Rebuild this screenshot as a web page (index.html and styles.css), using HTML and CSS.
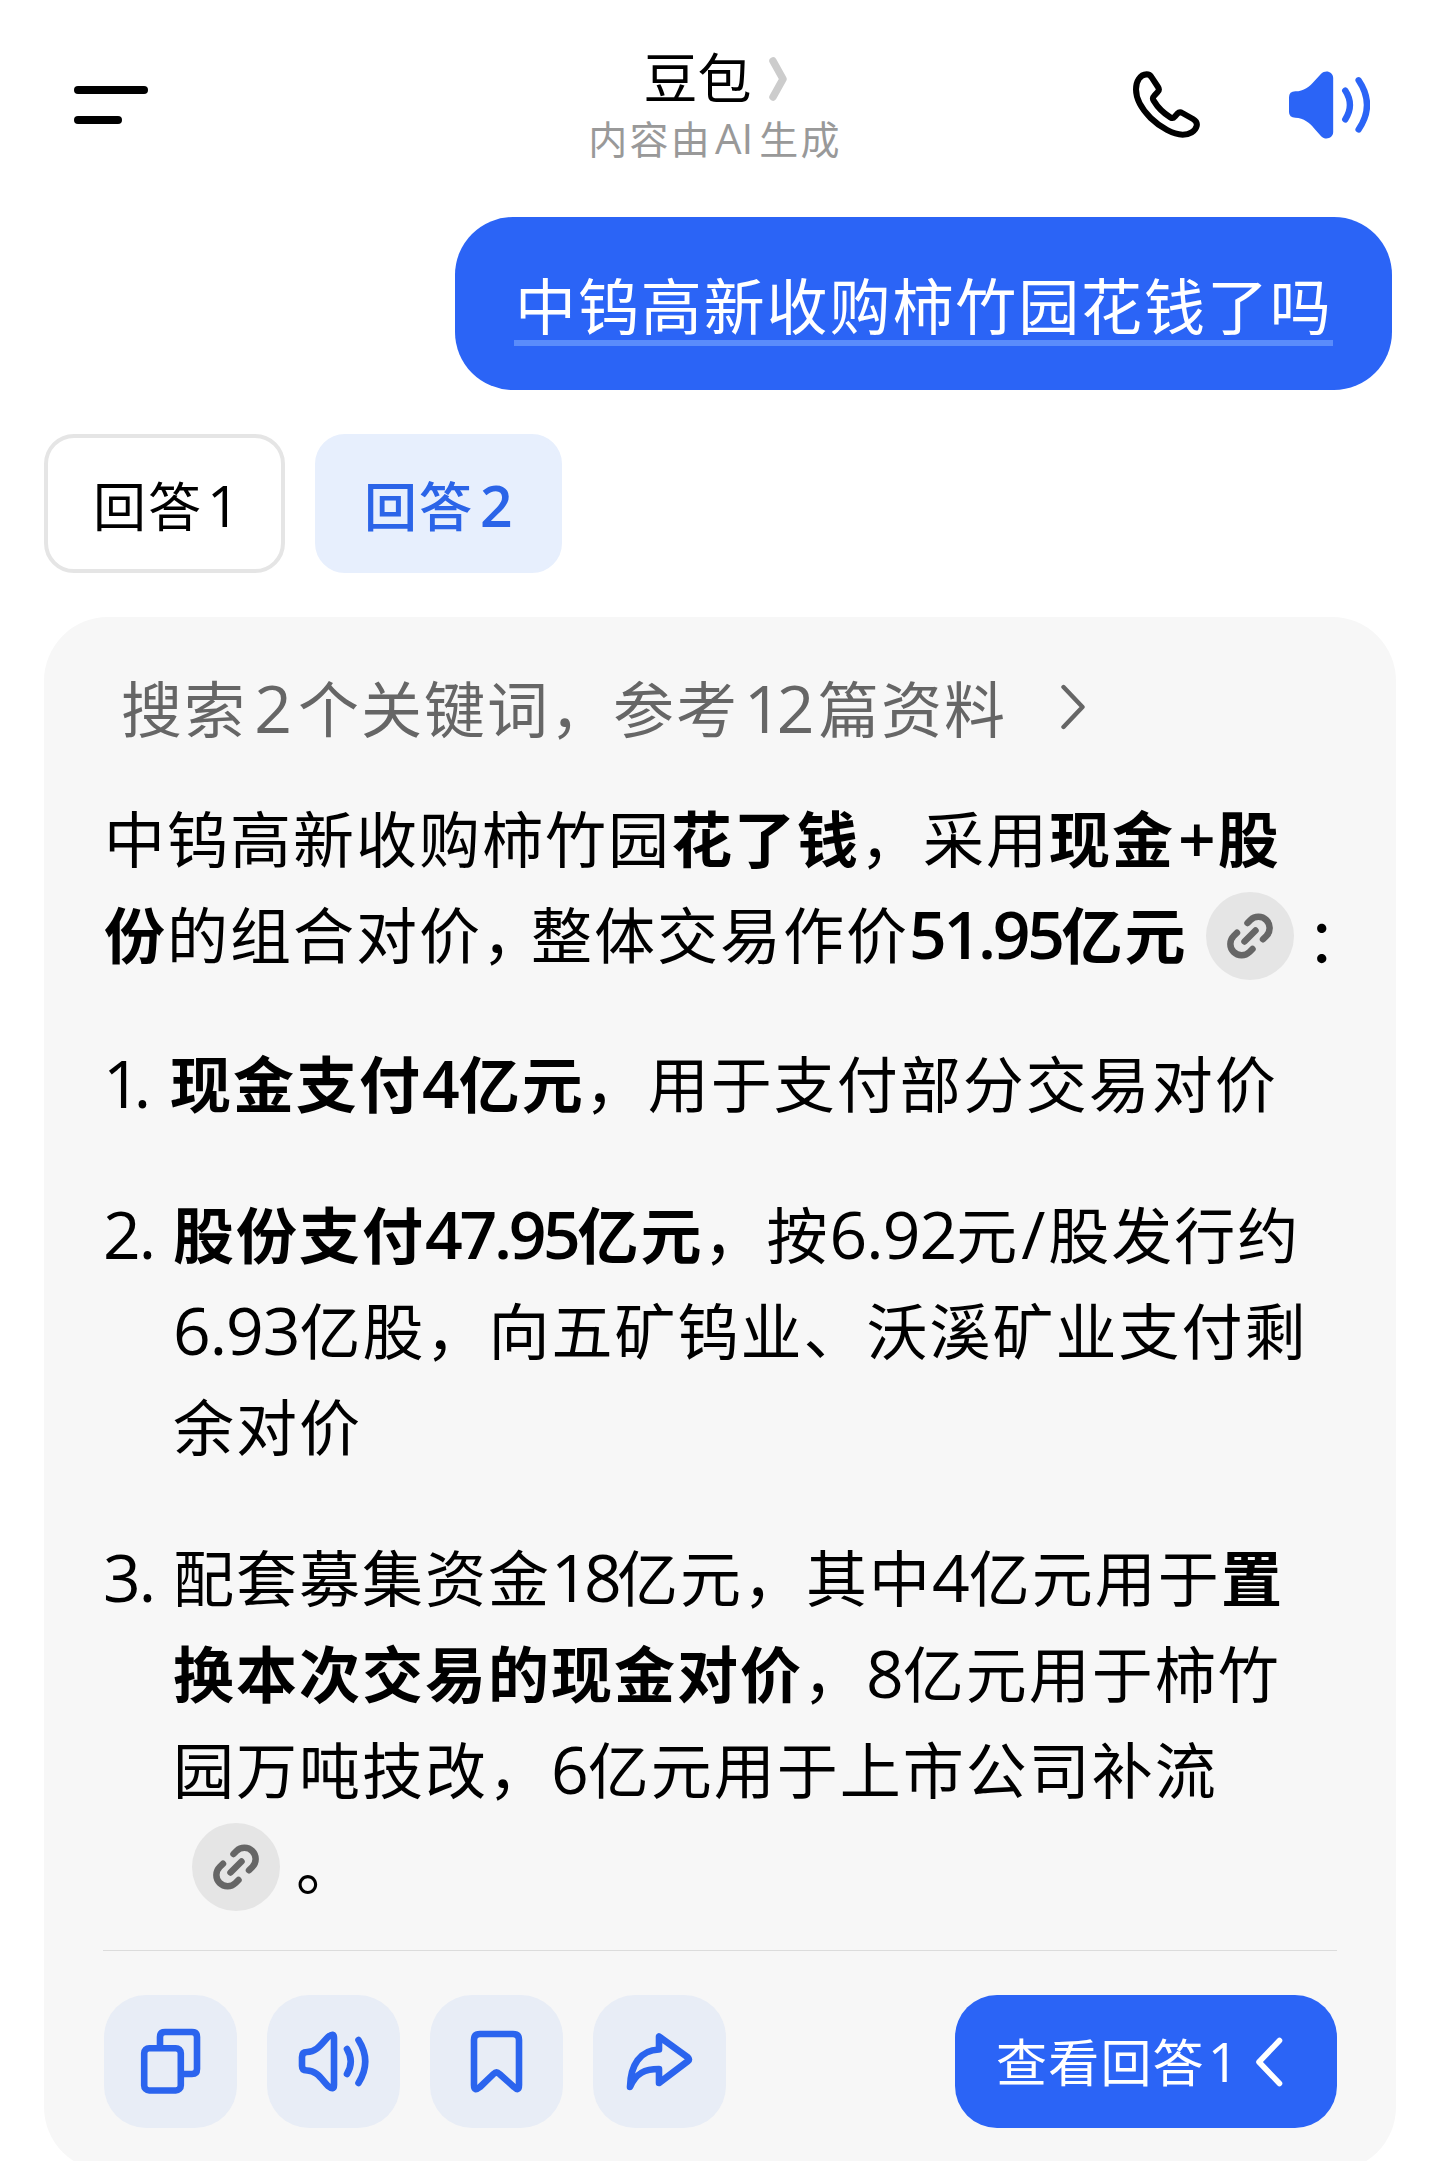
FILE: index.html
```html
<!DOCTYPE html>
<html lang="zh-CN">
<head>
<meta charset="utf-8">
<title>豆包</title>
<link rel="stylesheet" href="styles.css">
</head>
<body>
<svg class="defs" width="0" height="0" aria-hidden="true">
  <symbol id="link" viewBox="0 0 88 88">
    <path d="M41.5 31 L44.5 28 A11.2 11.2 0 0 1 60.3 44 L57 47.3 M46.5 57 L43.5 60 A11.2 11.2 0 0 1 27.7 44 L31 40.7 M38.500 49.500 L49.500 38.500" fill="none" stroke="#666" stroke-width="6.5" stroke-linecap="round"/>
  </symbol>
</svg>
<header class="header">
  <div class="menu"><i></i><i></i></div>
  <div class="heading">
    <h1 class="title">豆包<svg class="title-arrow" viewBox="0 0 18 44"><path d="M4 4 L14 22 L4 40" fill="none" stroke="#ccc" stroke-width="7.5" stroke-linecap="round" stroke-linejoin="round"/></svg></h1>
    <p class="subtitle">内容由<span class="latin">AI</span>生成</p>
  </div>
  <div class="header-actions">
    <svg class="phone" viewBox="39 62 201 201"><path d="M80 72 C88 72 92 76 95 81 L114 110 C118 116 117 121 113 125 L102 137 C98 141 98 146 101 151 C113 171 131 189 151 201 C156 204 161 203 164 199 L172 190 C176 186 182 185 187 188 L219 206 C229 212 232 219 230 227 C226 243 208 253 188 253 C160 253 122 232 92 203 C63 174 48 142 48 117 C48 92 60 73 80 72Z" fill="none" stroke="#000" stroke-width="18" stroke-linejoin="round"/></svg>
    <svg class="speaker" viewBox="508 64 242 202"><path d="M508 142 Q508 124 527 124 C552 124 570 109 584 93 L604 72 C617 58 640 66 640 84 V246 C640 264 617 272 604 258 L584 236 C570 218 552 204 527 203 Q508 203 508 186Z" fill="#2b64f6"/><path d="M676 122 Q704 165 676 208 M716 91 Q766 165 716 238" fill="none" stroke="#2b64f6" stroke-width="19" stroke-linecap="round"/></svg>
  </div>
</header>

<main>
  <div class="bubble"><span>中钨高新收购柿竹园花钱了吗</span></div>

  <nav class="tabs">
    <button class="tab">回答<span class="latin">1</span></button>
    <button class="tab tab-active">回答<span class="latin">2</span></button>
  </nav>

  <article class="answer">
    <div class="search">搜索<span class="num num-two">2</span>个关键词，参考<span class="num num-twelve">12</span>篇资料<svg class="search-arrow" viewBox="0 0 24 46"><path d="M2.5 3 L21.5 23 L2.5 43" fill="none" stroke="#666" stroke-width="4.4" stroke-linecap="round" stroke-linejoin="round"/></svg></div>

    <p class="para"><span class="line">中钨高新收购柿竹园<b>花了钱</b>，采用<b>现金<span class="num plus">+</span>股</b></span><span class="line"><b>份</b>的组合对价<span class="comma">，</span>整体交易作价<b><span class="num tight">51.95</span>亿元</b><span class="ref"><svg viewBox="0 0 88 88"><use href="#link"/></svg></span><span class="colon">：</span></span></p>

    <ol class="list">
      <li><span class="marker marker-one">1.</span><div class="item item-one"><span class="line"><b>现金支付<span class="num">4</span>亿元</b>，用于支付部分交易对价</span></div></li>
      <li><span class="marker">2.</span><div class="item"><span class="line"><b>股份支付<span class="num tight">47.95</span>亿元</b>，按<span class="num">6.92</span>元<span class="num slash">/</span>股发行约</span><span class="line"><span class="num">6.93</span>亿股，向五矿钨业、沃溪矿业支付剩</span><span class="line">余对价</span></div></li>
      <li><span class="marker">3.</span><div class="item"><span class="line">配套募集资金<span class="num tighter">18</span>亿元，其中<span class="num">4</span>亿元用于<b>置</b></span><span class="line"><b>换本次交易的现金对价</b>，<span class="num">8</span>亿元用于柿竹</span><span class="line">园万吨技改，<span class="num">6</span>亿元用于上市公司补流</span><span class="line"><span class="ref"><svg viewBox="0 0 88 88"><use href="#link"/></svg></span><span class="stop">。</span></span></div></li>
    </ol>

    <footer class="footer">
      <button class="action"><svg viewBox="0 0 133 133"><rect x="40.2" y="53.2" width="36.6" height="42.3" rx="5"/><path d="M56 51 V42 Q56 37 61 37 H88 Q93 37 93 42 V74 Q93 79 88 79 H79"/></svg></button>
      <button class="action"><svg viewBox="0 0 133 133"><path d="M35 62 Q35 57 40 57 C50 57 55 48 61 42 Q67 37 67 43 V90 Q67 96 61 91 C55 85 50 75.5 40 75.5 Q35 75.5 35 71Z M80 54 Q87.5 66.5 80 79 M91.5 45 Q105 66.5 91.5 88"/></svg></button>
      <button class="action"><svg viewBox="0 0 133 133"><path d="M44 45 Q44 39 50 39 H83 Q89 39 89 45 V90 Q89 97 84 92 L69.5 79 Q66.5 76 63.5 79 L50 92 Q44 97 44 90Z"/></svg></button>
      <button class="action"><svg viewBox="0 0 133 133"><path d="M66 41.5 V54.5 C47 55 37.500 70 37 92 C43 78 52 74 66 74 V88 L95 66 Q97 64.5 95 62.500Z"/></svg></button>
      <button class="switch">查看回答<span class="latin">1</span><svg class="switch-arrow" viewBox="0 0 28 50"><path d="M24.500 3.500 L4 25 L24.500 46.500" fill="none" stroke="#fff" stroke-width="5.600" stroke-linecap="round" stroke-linejoin="round"/></svg></button>
    </footer>
  </article>
</main>
</body>
</html>
```
FILE: styles.css
```css
* { box-sizing: border-box; margin: 0; padding: 0; }
body {
  width: 1440px;
  height: 2161px;
  overflow: hidden;
  background: #fff;
  color: #000;
  font-family: "Noto Sans CJK SC", sans-serif;
  white-space: nowrap;
}
button { border: 0; background: none; font: inherit; color: inherit; }
svg { display: block; }
b { font-weight: 700; }
.defs { position: absolute; }
.latin, .num, .marker { font-family: "Open Sans", sans-serif; line-height: 1; }
b .num { font-weight: 600; }

.header { display: flex; height: 217px; padding: 0 70px 0 74px; }
.menu { width: 74px; padding-top: 86px; }
.menu i { display: block; width: 74px; height: 8px; border-radius: 4px; background: #000; }
.menu i + i { width: 48px; margin-top: 22px; }
.heading { width: 260px; margin-left: 437px; padding-top: 46px; display: flex; flex-direction: column; align-items: center; }
.title { display: flex; align-items: center; height: 60px; font-size: 54px; line-height: 60px; font-weight: 400; }
.title-arrow { width: 18px; height: 44px; margin: 5px 0 0 17px; }
.subtitle { height: 40px; margin-top: 11px; font-size: 39px; line-height: 40px; letter-spacing: 2.2px; color: #999; }
.subtitle .latin { font-size: 42px; letter-spacing: 0; margin: 0 6px 0 3px; }
.header-actions { display: flex; gap: 89px; margin-left: auto; padding-top: 71px; }
.phone { width: 67px; height: 67px; }
.speaker { width: 81px; height: 68px; }

.bubble {
  width: 937px; height: 173px; margin-left: 455px; padding: 45px 59px 0 59px;
  border-radius: 58px; background: #2b64f6; color: #fff; font-size: 61px; line-height: 84px;
}
.bubble span { display: block; height: 84px; padding-left: 1px; border-bottom: 6px solid #5a8cfb; letter-spacing: 1.9px; }

.tabs { display: flex; gap: 30px; padding: 44px 0 0 44px; }
.tab { width: 241px; height: 139px; padding: 1px 0 0 45px; border-radius: 30px; border: 4px solid #e5e5e5; text-align: left; font-size: 53px; letter-spacing: 2px; }
.tab .latin { font-size: 57px; margin-left: 4px; }
.tab-active { width: 247px; border-color: #e7effd; background: #e7effd; color: #2b64e8; font-weight: 500; }
.tab-active .latin { font-weight: 600; margin-left: 6px; }

.answer {
  width: 1352px; height: 1554px; margin: 44px 0 0 44px; padding: 42px 59px 0;
  border-radius: 64px; background: #f7f7f7; font-size: 61px; line-height: 96px; letter-spacing: 2px;
}
.search { display: flex; align-items: baseline; height: 96px; padding-left: 18px; color: #666; }
.search-arrow { width: 24px; height: 46px; align-self: center; margin-left: 54px; }
.line { display: block; height: 96px; }
.num { font-size: 66px; letter-spacing: -1px; }
.num-two { width: 51px; text-align: center; }
.num-twelve { width: 79px; padding-left: 5px; letter-spacing: -5px; }
.tight { letter-spacing: -3.3px; }
.tighter { letter-spacing: -4.7px; }
.plus { margin: 0 3px; }
.slash { margin: 0 4px 0 2px; }
.comma { letter-spacing: -12px; }
.para { margin-top: 34px; padding-left: 1px; }
.ref { display: inline-block; width: 88px; height: 88px; vertical-align: -21px; margin-left: 19px; border-radius: 50%; background: #e5e5e5; line-height: 0; }
.para .ref { margin-left: 18px; }
.colon { display: inline-block; height: 96px; margin-left: 13px; line-height: 104px; vertical-align: top; }
.stop { display: inline-block; margin-left: 16px; }

.list { list-style: none; padding-top: 53px; }
.list li { display: flex; }
.list li + li { margin-top: 55px; }
.marker { width: 70px; font-size: 66px; line-height: 96px; letter-spacing: -2px; }
.marker-one { width: 67px; letter-spacing: -7px; }

.footer { display: flex; gap: 30px; margin-top: 38px; padding: 44px 0 0 1px; border-top: 1px solid #dcdcdc; width: 1234px; }
.action { width: 133px; height: 133px; border-radius: 42px; background: #e8edf6; }
.action svg { width: 133px; height: 133px; fill: none; stroke: #2b64ee; stroke-width: 6.6; stroke-linecap: round; stroke-linejoin: round; }
.switch {
  display: flex; align-items: baseline; width: 382px; height: 133px; margin-left: auto; padding: 0 0 0 41px;
  border-radius: 42px; background: #2b64f6; color: #fff; font-size: 51px; line-height: 130px; letter-spacing: 1.2px;
}
.switch .latin { font-size: 54px; margin-left: 3px; }
.switch-arrow { width: 28px; height: 50px; align-self: center; margin-left: 15px; }
```
